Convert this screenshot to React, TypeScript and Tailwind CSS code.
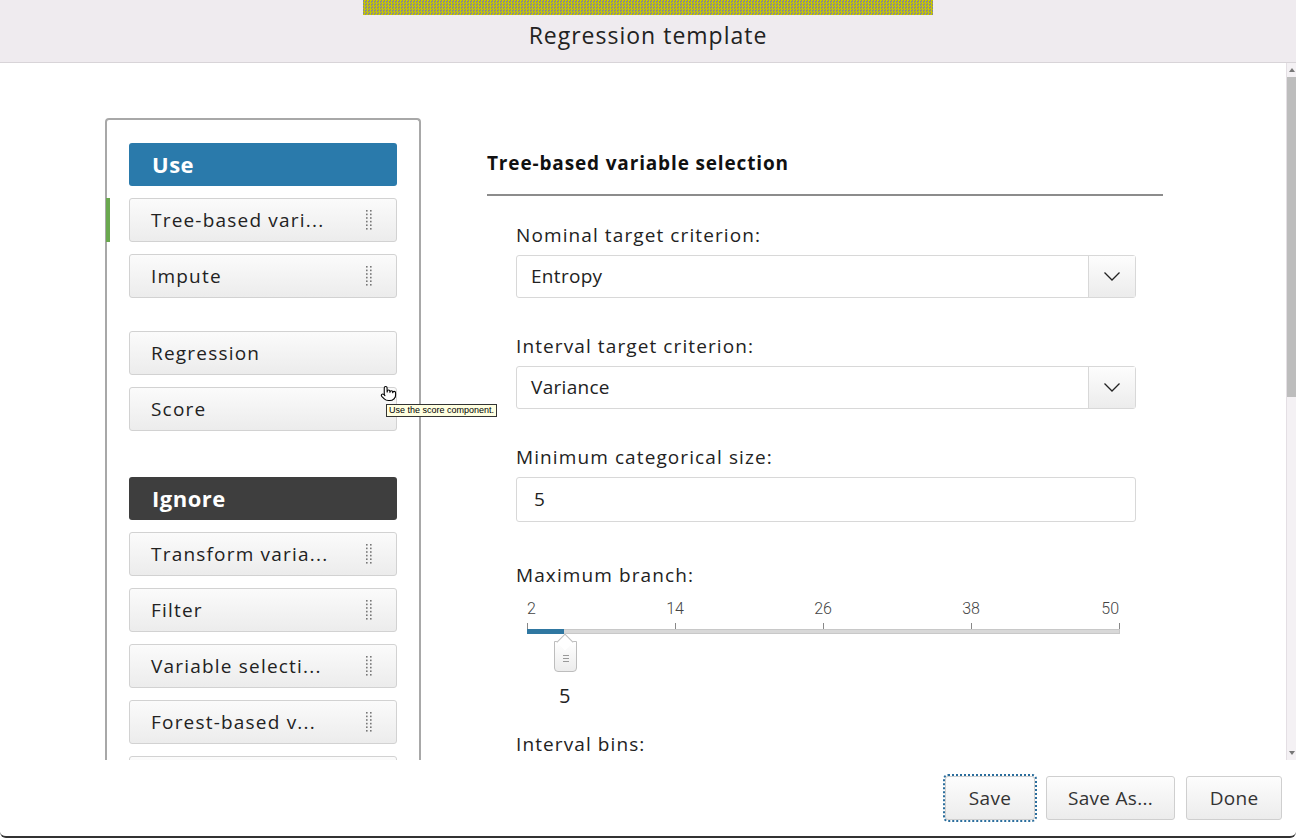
import { Pointer } from "lucide-react";

const font = "font-['Open_Sans','Lato',sans-serif]";

function DragHandle() {
  return (
    <svg width="10" height="22" viewBox="0 0 10 22" className="shrink-0">
      {[0, 1, 2, 3, 4, 5].map((i) => (
        <g key={i} fill="#777">
          <rect x="2" y={1 + i * 3.6} width="1.6" height="1.6" />
          <rect x="6" y={1 + i * 3.6} width="1.6" height="1.6" />
        </g>
      ))}
    </svg>
  );
}

type Item = { label: string; handle?: boolean };

function ListItem({ label, handle }: Item) {
  return (
    <div className="flex h-[44px] items-center justify-between rounded-[3px] border border-[#d2d2d2] bg-gradient-to-b from-[#fbfbfb] to-[#ececec] pl-[21px] pr-[22px] text-[19px] tracking-[1.2px] text-[#222]">
      <span>{label}</span>
      {handle ? <DragHandle /> : null}
    </div>
  );
}

function GroupHeader({ label, tone }: { label: string; tone: "use" | "ignore" }) {
  return (
    <div
      className={
        "flex h-[43px] items-center rounded-[3px] pl-[23px] text-[22px] font-bold tracking-[0.5px] text-white " +
        (tone === "use" ? "bg-[#2a7aab]" : "bg-[#3e3e3e]")
      }
    >
      {label}
    </div>
  );
}

function Select({ value }: { value: string }) {
  return (
    <div className="flex h-[43px] w-[620px] items-stretch rounded-[3px] border border-[#d8d8d8] bg-white">
      <div className="flex flex-1 items-center pl-[14px] text-[19px] tracking-[0.3px] text-[#222]">{value}</div>
      <div className="flex w-[47px] items-center justify-center border-l border-[#d8d8d8] bg-gradient-to-b from-[#fdfdfd] to-[#ececec]">
        <svg width="18" height="11" viewBox="0 0 18 11">
          <path d="M1.5 1.5 L9 9 L16.5 1.5" fill="none" stroke="#222" strokeWidth="1.3" />
        </svg>
      </div>
    </div>
  );
}

function Field({ label, children }: { label: string; children: React.ReactNode }) {
  return (
    <div className="flex flex-col">
      <div className="mb-[8px] text-[19px] leading-[24px] tracking-[1.1px] text-[#222]">{label}</div>
      {children}
    </div>
  );
}

function Slider() {
  const ticks = [
    { v: "2", x: 0 },
    { v: "14", x: 148 },
    { v: "26", x: 296 },
    { v: "38", x: 444 },
    { v: "50", x: 592 },
  ];
  return (
    <div className="relative h-[130px] w-[620px]">
      {ticks.map((t, i) => (
        <div key={t.v} className="absolute top-0" style={{ left: 12 + t.x }}>
          <div
            className="absolute top-[0px] text-[16px] font-light text-[#444] font-['Roboto','Liberation_Sans',sans-serif]"
            style={{ transform: i === 0 ? "translateX(0)" : i === 4 ? "translateX(-100%)" : "translateX(-50%)" }}
          >
            {t.v}
          </div>
          <div className="absolute top-[26px] h-[8px] w-px bg-[#888]" />
        </div>
      ))}
      <div className="absolute left-[12px] top-[32px] h-[5px] w-[593px] border border-[#c8c8c8] bg-[#d8d8d8]" />
      <div className="absolute left-[12px] top-[32px] h-[5px] w-[37px] bg-[#2f77a1]" />
      <div className="absolute left-[39px] top-[44px] h-[31px] w-[23px] rounded-b-[4px] border border-[#bdbdbd] bg-gradient-to-b from-white to-[#ececec]">
        <div className="absolute -top-[6px] left-[4px] h-[12px] w-[12px] rotate-45 border-l border-t border-[#bdbdbd] bg-white" />
        <div className="absolute left-[8px] top-[13px] flex flex-col gap-[2px]">
          <div className="h-px w-[6px] bg-[#999]" />
          <div className="h-px w-[6px] bg-[#999]" />
          <div className="h-px w-[6px] bg-[#999]" />
        </div>
      </div>
      <div className="absolute left-[44px] top-[84px] text-[20px] text-[#222]">5</div>
    </div>
  );
}

function FooterButton({ label, width, focused }: { label: string; width: number; focused?: boolean }) {
  return (
    <div
      className={
        "flex h-[44px] items-center justify-center rounded-[3px] border border-[#cfcfcf] bg-gradient-to-b from-[#fdfdfd] to-[#ececec] text-[19px] tracking-[0.3px] text-[#333] " +
        (focused ? "outline-2 outline-dotted outline-[#2a6d9c]" : "")
      }
      style={{ width }}
    >
      {label}
    </div>
  );
}

export default function App() {
  const useItems: Item[] = [
    { label: "Tree-based vari...", handle: true },
    { label: "Impute", handle: true },
  ];
  const useItems2: Item[] = [{ label: "Regression" }, { label: "Score" }];
  const ignoreItems: Item[] = [
    { label: "Transform varia...", handle: true },
    { label: "Filter", handle: true },
    { label: "Variable selecti...", handle: true },
    { label: "Forest-based v...", handle: true },
    { label: "" },
  ];

  return (
    <div className={"h-[838px] w-[1296px] overflow-hidden bg-white " + font}>
      <div className="flex h-[838px] flex-col rounded-b-[6px] border-b-2 border-[#333]">
        {/* header */}
        <div className="relative flex h-[63px] shrink-0 flex-col items-center border-b border-[#d8d4d8] bg-[#efebef]">
          <div className="h-[15px] w-[570px] bg-[repeating-conic-gradient(#c8c800_0_25%,#8a8a8a_0_50%)] bg-[length:3px_3px]" />
          <div className="mt-[3px] text-[23px] font-normal tracking-[1px] text-[#222]">Regression template</div>
        </div>

        {/* body */}
        <div className="relative flex h-[697px] shrink-0 overflow-hidden">
          <div className="flex flex-1">
            {/* left panel */}
            <div className="ml-[105px] mt-[55px] h-[700px] w-[316px] shrink-0 rounded-t-[4px] border-2 border-b-0 border-[#a8a8a8] px-[22px] pt-[23px]">
              <div className="relative flex flex-col gap-[12px]">
                <GroupHeader label="Use" tone="use" />
                <div className="absolute left-[-23px] top-[55px] h-[44px] w-[4px] bg-[#6aa84f]" />
                {useItems.map((it) => (
                  <ListItem key={it.label} {...it} />
                ))}
                <div className="h-[10px]" />
                <div className="-mt-[1px] flex flex-col gap-[12px]">
                  {useItems2.map((it) => (
                    <ListItem key={it.label} {...it} />
                  ))}
                </div>
                <div className="h-[22px]" />
                <GroupHeader label="Ignore" tone="ignore" />
                <div className="flex flex-col gap-[12px]">
                  {ignoreItems.map((it, i) => (
                    <ListItem key={i} {...it} />
                  ))}
                </div>
              </div>
            </div>

            {/* right panel */}
            <div className="ml-[66px] mt-[88px] w-[676px] shrink-0">
              <div className="border-b-2 border-[#8c8c8c] pb-[19px] text-[19px] font-bold leading-[24px] tracking-[0.85px] text-[#111]">
                Tree-based variable selection
              </div>
              <div className="ml-[29px] mt-[27px] flex flex-col gap-[36px]">
                <Field label="Nominal target criterion:">
                  <Select value="Entropy" />
                </Field>
                <Field label="Interval target criterion:">
                  <Select value="Variance" />
                </Field>
                <Field label="Minimum categorical size:">
                  <div className="flex h-[45px] w-[620px] items-center rounded-[3px] border border-[#d8d8d8] bg-white pl-[17px] text-[19px] text-[#222]">
                    5
                  </div>
                </Field>
                <div className="mt-[5px] flex flex-col">
                  <div className="mb-[10px] text-[19px] leading-[24px] tracking-[1.1px] text-[#222]">Maximum branch:</div>
                  <div className="-ml-[1px]">
                    <Slider />
                  </div>
                  <div className="mt-[5px] text-[19px] leading-[24px] tracking-[1.1px] text-[#222]">Interval bins:</div>
                </div>
              </div>
            </div>
          </div>

          {/* scrollbar */}
          <div className="flex w-[10px] shrink-0 flex-col border-l border-[#e4dfe4] bg-[#f4f1f4]">
            <div className="flex h-[14px] items-center justify-center">
              <div className="h-0 w-0 border-x-[3px] border-b-[4px] border-x-transparent border-b-[#777]" />
            </div>
            <div className="h-[320px] bg-[#bdbdbd]" />
            <div className="flex-1" />
            <div className="flex h-[14px] items-center justify-center">
              <div className="h-0 w-0 border-x-[3px] border-t-[4px] border-x-transparent border-t-[#777]" />
            </div>
          </div>

          {/* tooltip + cursor */}
          <div className="absolute left-[380px] top-[322px] text-black">
            <Pointer size={17} strokeWidth={1.5} fill="white" />
          </div>
          <div className="absolute left-[386px] top-[341px] border border-[#333] bg-[#ffffe1] px-[2px] text-[9px] leading-[11px] text-black font-['Liberation_Sans',sans-serif]">
            Use the score component.
          </div>
        </div>

        {/* footer */}
        <div className="flex flex-1 items-start justify-end gap-[11px] pr-[14px] pt-[16px]">
          <FooterButton label="Save" width={90} focused />
          <FooterButton label="Save As..." width={129} />
          <FooterButton label="Done" width={96} />
        </div>
      </div>
    </div>
  );
}
